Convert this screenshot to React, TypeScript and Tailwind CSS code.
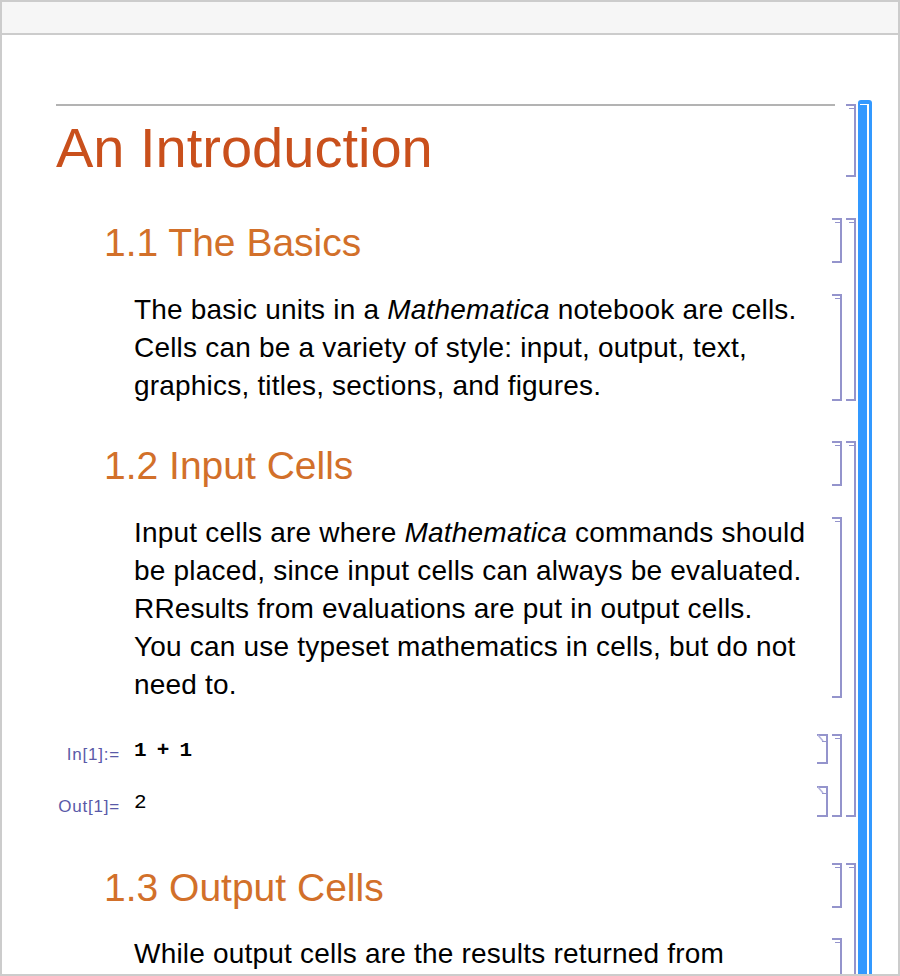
import React from 'react';

// Cell bracket on the right side of each cell / group
function Bracket({ io = false, width = 'w-[10px]' }: { io?: boolean; width?: string }) {
  return (
    <div className={`relative shrink-0 ${width} border-t-2 border-b-2 border-r-2 border-[#9494cc]`}>
      {io ? (
        <svg className="absolute left-0 -top-[2px]" width="10" height="10" viewBox="0 0 10 10">
          <line x1="1" y1="1" x2="6" y2="7" stroke="#b4b4de" strokeWidth="1.6" />
          <line x1="5" y1="7.5" x2="9" y2="7.5" stroke="#9494cc" strokeWidth="1" />
        </svg>
      ) : (
        <div className="absolute right-0 top-[2px] w-[5px] h-px bg-[#9494cc]" />
      )}
    </div>
  );
}

// Selected group bracket (blue)
function SelectedBracket() {
  return (
    <div className="relative shrink-0 w-[14px] bg-[#3399ff] rounded-t-[3px]">
      <div className="absolute left-[2px] right-[3px] top-[4px] h-px bg-white" />
      <div className="absolute right-[3px] top-[4px] bottom-0 w-[2px] bg-white" />
    </div>
  );
}

function Heading({ children }: { children: React.ReactNode }) {
  return (
    <div className="flex h-[45px]">
      <div className="flex-1 min-w-0 pl-[102px] pt-[2px] text-[39px] leading-[45px] text-[#d2702a] whitespace-nowrap">
        {children}
      </div>
      <Bracket />
    </div>
  );
}

function TextCell({ height, margin, children }: { height: string; margin: string; children: React.ReactNode }) {
  return (
    <div className={`flex ${height} ${margin}`}>
      <div className="flex-1 min-w-0 pl-[132px]">
        <p className="-mt-[3px] text-[28px] leading-[38px] tracking-[0.2px] text-black whitespace-nowrap">{children}</p>
      </div>
      <Bracket />
    </div>
  );
}

function IOCell({ label, value, bold, height, margin }: { label: string; value: string; bold?: boolean; height: string; margin: string }) {
  return (
    <div className={`flex ${height} ${margin}`}>
      <div className="flex-1 min-w-0 flex items-start">
        <div className="w-[118px] shrink-0 pt-[6px] text-right text-[17px] leading-[30px] tracking-[0.8px] text-[#5a5aa8] whitespace-nowrap">
          {label}
        </div>
        <div
          className={`ml-[14px] pt-[2px] text-[21px] leading-[30px] tracking-[-1.2px] text-black whitespace-pre ${bold ? 'font-bold' : ''}`}
          style={{ fontFamily: '"Liberation Mono", "Courier New", monospace' }}
        >
          {value}
        </div>
      </div>
      <Bracket io width="w-[11px]" />
    </div>
  );
}

export default function App() {
  return (
    <div
      className="w-[900px] h-[976px] overflow-hidden flex flex-col bg-white border-2 border-[#cccccc]"
      style={{ fontFamily: '"Liberation Sans", Arial, sans-serif' }}
    >
      <div className="h-[33px] shrink-0 bg-[#f6f6f6] border-b-2 border-[#cccccc]" />

      <div className="flex gap-[2px] pt-[65px] pr-[26px]">
        <div className="flex-1 min-w-0 flex flex-col pt-[4px]">
          {/* Title */}
          <div className="flex h-[73px]">
            <div className="flex-1 min-w-0 ml-[54px] border-t-2 border-[#b3b3b3] pt-[11px] text-[56px] leading-[62px] text-[#c9501c] whitespace-nowrap">
              An Introduction
            </div>
            <div className="w-[11px] shrink-0" />
            <Bracket />
          </div>

          {/* 1.1 */}
          <div className="flex gap-[4px] mt-[41px]">
            <div className="flex-1 min-w-0 flex flex-col">
              <Heading>1.1 The Basics</Heading>
              <TextCell height="h-[107px]" margin="mt-[31px]">
                The basic units in a <i>Mathematica</i> notebook are cells.
                <br />
                Cells can be a variety of style: input, output, text,
                <br />
                graphics, titles, sections, and figures.
              </TextCell>
            </div>
            <Bracket />
          </div>

          {/* 1.2 */}
          <div className="flex gap-[4px] mt-[40px]">
            <div className="flex-1 min-w-0 flex flex-col">
              <Heading>1.2 Input Cells</Heading>
              <TextCell height="h-[181px]" margin="mt-[31px]">
                Input cells are where <i>Mathematica</i> commands should
                <br />
                be placed, since input cells can always be evaluated.
                <br />
                RResults from evaluations are put in output cells.
                <br />
                You can use typeset mathematics in cells, but do not
                <br />
                need to.
              </TextCell>
              <div className="flex gap-[4px] mt-[36px]">
                <div className="flex-1 min-w-0 flex flex-col">
                  <IOCell label="In[1]:=" value="1 + 1" bold height="h-[30px]" margin="mt-0" />
                  <IOCell label="Out[1]=" value="2" height="h-[31px]" margin="mt-[22px]" />
                </div>
                <Bracket />
              </div>
            </div>
            <Bracket />
          </div>

          {/* 1.3 */}
          <div className="flex gap-[4px] mt-[46px]">
            <div className="flex-1 min-w-0 flex flex-col">
              <Heading>1.3 Output Cells</Heading>
              <TextCell height="h-[140px]" margin="mt-[30px]">
                While output cells are the results returned from
              </TextCell>
            </div>
            <Bracket />
          </div>
        </div>
        <SelectedBracket />
      </div>
    </div>
  );
}
